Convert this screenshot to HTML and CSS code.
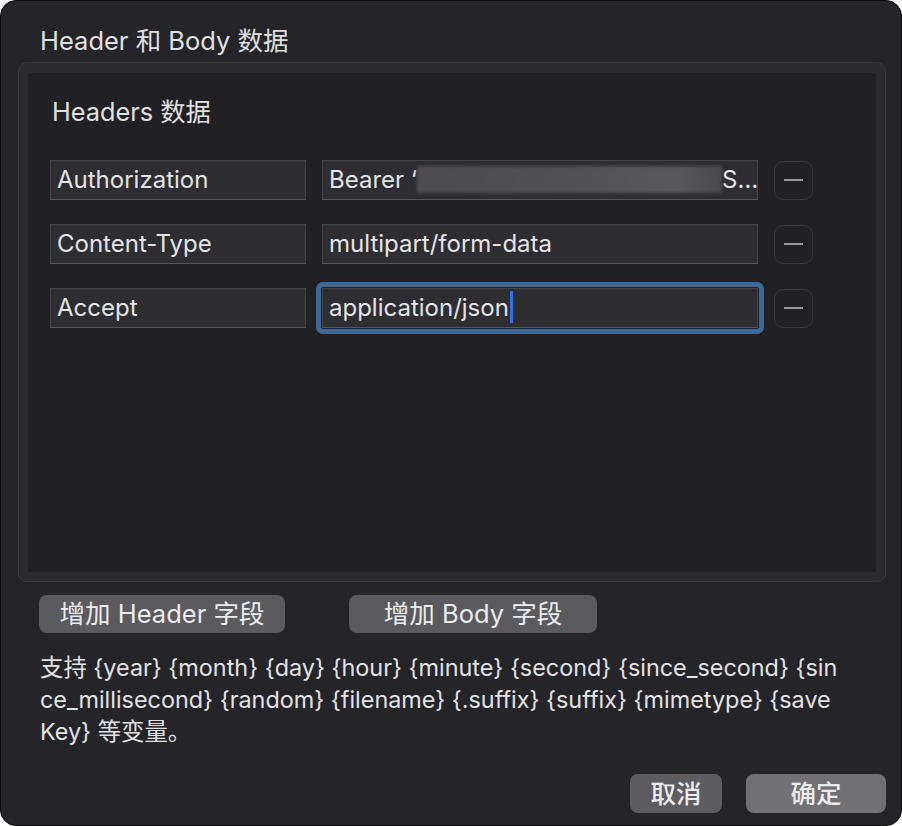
FILE: index.html
```html
<!DOCTYPE html>
<html lang="zh-CN">
<head>
<meta charset="utf-8">
<title>Header 和 Body 数据</title>
<link rel="stylesheet" href="styles.css">
</head>
<body>
<div class="window">
  <div class="title">Header 和 Body 数据</div>
  <div class="group">
    <div class="group-inner">
      <div class="section-label">Headers 数据</div>
      <div class="rows">
        <div class="row">
          <div class="field key">Authorization</div>
          <div class="field value">Bearer ‘<span class="redacted"></span>S…</div>
          <div class="minus"><span class="bar"></span></div>
        </div>
        <div class="row">
          <div class="field key">Content-Type</div>
          <div class="field value">multipart/form-data</div>
          <div class="minus"><span class="bar"></span></div>
        </div>
        <div class="row">
          <div class="field key">Accept</div>
          <div class="field value focused">application/json<span class="caret"></span></div>
          <div class="minus"><span class="bar"></span></div>
        </div>
      </div>
    </div>
  </div>
  <div class="add-row">
    <div class="btn add-header">增加 Header 字段</div>
    <div class="btn add-body">增加 Body 字段</div>
  </div>
  <div class="desc">
    <div class="line">支持 {year} {month} {day} {hour} {minute} {second} {since_second} {sin</div>
    <div class="line">ce_millisecond} {random} {filename} {.suffix} {suffix} {mimetype} {save</div>
    <div class="line">Key} 等变量。</div>
  </div>
  <div class="footer">
    <div class="btn cancel">取消</div>
    <div class="btn ok">确定</div>
  </div>
</div>
</body>
</html>
```

FILE: styles.css
```css
html, body {
  margin: 0;
  padding: 0;
  background: #ffffff;
}

body {
  font-family: Inter, "Noto Sans CJK SC", sans-serif;
  color: #e2e2e4;
}

.window {
  width: 902px;
  height: 826px;
  box-sizing: border-box;
  background: #242429;
  border: 1px solid #0c0c0e;
  border-radius: 16px;
  padding: 0 15px 0 17px;
  display: flex;
  flex-direction: column;
  overflow: hidden;
}

.title {
  font-size: 25.5px;
  line-height: 32px;
  padding-top: 24px;
  padding-left: 22px;
  margin-bottom: 5px;
  color: #e0e0e2;
}

.group {
  height: 520px;
  box-sizing: border-box;
  border: 1px solid #3b3b41;
  border-radius: 9px;
  background: #2a2a2f;
  padding: 10px 9px 9px 9px;
  display: flex;
}

.group-inner {
  flex: 1;
  background: #202025;
  border-radius: 2px;
  padding: 23px 0 0 22px;
}

.section-label {
  font-size: 25.3px;
  line-height: 32px;
  padding-left: 2px;
  color: #e0e0e2;
}

.rows {
  margin-top: 32px;
  display: flex;
  flex-direction: column;
  gap: 24px;
}

.row {
  display: flex;
  align-items: center;
  gap: 16px;
  height: 40px;
}

.field {
  height: 40px;
  box-sizing: border-box;
  background: #2d2d32;
  border: 1px solid #434348;
  border-bottom-color: #55555a;
  font-size: 24px;
  line-height: 38px;
  padding: 0 6px;
  white-space: nowrap;
  overflow: visible;
  color: #e4e4e6;
  position: relative;
}

.key {
  width: 256px;
}

.value {
  width: 436px;
}

.redacted {
  display: inline-block;
  vertical-align: middle;
  width: 305px;
  height: 27px;
  margin-top: -4px;
  background: linear-gradient(90deg, #4b4b50 0%, #505055 50%, #56565b 85%, #4a4a4f 100%);
  filter: blur(1.5px);
}

.focused::before {
  content: "";
  position: absolute;
  left: -7px;
  right: -7px;
  top: -7px;
  bottom: -7px;
  border: 5px solid #3c6898;
  border-radius: 7px;
  pointer-events: none;
}

.caret {
  display: inline-block;
  width: 3px;
  height: 32px;
  background: #2f6fe8;
  vertical-align: middle;
  margin-left: 1px;
  margin-top: -4px;
}

.minus {
  width: 39px;
  height: 39px;
  box-sizing: border-box;
  border: 1px solid #37373c;
  border-radius: 9px;
  display: flex;
  align-items: center;
  justify-content: center;
}

.minus .bar {
  width: 19px;
  height: 2px;
  background: #9a9a9e;
}

.add-row {
  margin-top: 13px;
  display: flex;
  gap: 64px;
  padding-left: 21px;
}

.btn {
  height: 38px;
  box-sizing: border-box;
  border-radius: 8px;
  background: #5a5a5f;
  color: #ececee;
  font-size: 25.5px;
  line-height: 38px;
  text-align: center;
}

.add-header {
  width: 246px;
}

.add-body {
  width: 248px;
}

.desc {
  margin-top: 19px;
  padding-left: 22px;
  font-size: 23.4px;
  line-height: 32px;
  color: #e2e2e4;
}

.desc .line {
  white-space: nowrap;
}

.footer {
  margin-top: 26px;
  display: flex;
  justify-content: flex-end;
  gap: 24px;
}

.footer .btn {
  height: 39px;
  line-height: 39px;
  font-weight: 500;
}

.cancel {
  width: 92px;
  background: #5c5c61;
}

.ok {
  width: 140px;
  background: #717175;
}
```
